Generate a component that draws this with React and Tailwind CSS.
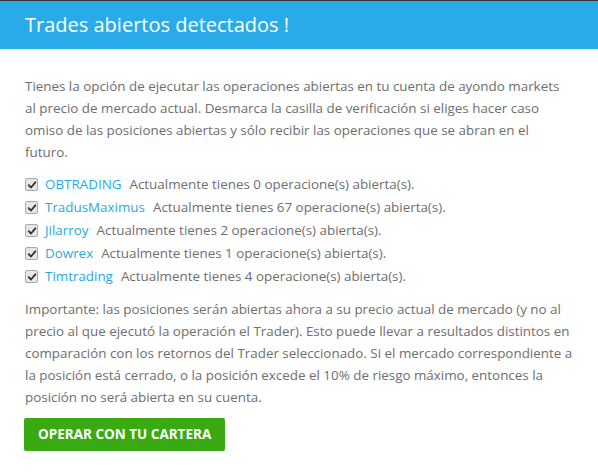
import { useState } from 'react';

const traders = [
  { name: 'OBTRADING', open: 0 },
  { name: 'TradusMaximus', open: 67 },
  { name: 'Jilarroy', open: 2 },
  { name: 'Dowrex', open: 1 },
  { name: 'Timtrading', open: 4 },
];

function Check({ checked, onToggle }) {
  return (
    <button
      type="button"
      onClick={onToggle}
      className="w-[13px] h-[13px] shrink-0 rounded-[2px] border border-[#a9a9a9] bg-[#e6e6e6] flex items-center justify-center"
    >
      {checked && (
        <svg viewBox="0 0 12 12" className="w-[10px] h-[10px]">
          <path d="M2 6.2 L4.8 9 L10 2.8" fill="none" stroke="#333" strokeWidth="2.2" strokeLinecap="round" strokeLinejoin="round" />
        </svg>
      )}
    </button>
  );
}

export default function App() {
  const [checked, setChecked] = useState(traders.map(() => true));

  const toggle = (i) => setChecked((prev) => prev.map((c, j) => (j === i ? !c : c)));

  return (
    <div className="w-[598px] h-[475px] bg-white font-['Open_Sans',sans-serif] text-[13.4px] text-[#6e6e6e] border-t border-[#333]">
      <div className="h-[48px] bg-[#29abe9] border-b border-[#e8e8e8] box-content flex items-center px-[25px]">
        <h1 className="text-[20px] text-white leading-none">Trades abiertos detectados !</h1>
      </div>

      <div className="pl-[25px] pr-[23px] pt-[25px]">
        <p className="leading-[22px] pr-[10px]">
          Tienes la opción de ejecutar las operaciones abiertas en tu cuenta de ayondo markets al precio de mercado
          actual. Desmarca la casilla de verificación si eliges hacer caso omiso de las posiciones abiertas y sólo
          recibir las operaciones que se abran en el futuro.
        </p>

        <ul className="mt-[10px]">
          {traders.map((t, i) => (
            <li key={t.name} className="h-[23px] flex items-center gap-[7px]">
              <Check checked={checked[i]} onToggle={() => toggle(i)} />
              <span>
                <a href="#" className="text-[#29aae2]">
                  {t.name}
                </a>
                <span className="ml-[8px]">Actualmente tienes {t.open} operacione(s) abierta(s).</span>
              </span>
            </li>
          ))}
        </ul>

        <p className="mt-[10px] leading-[22px]">
          Importante: las posiciones serán abiertas ahora a su precio actual de mercado (y no al precio al que ejecutó
          la operación el Trader). Esto puede llevar a resultados distintos en comparación con los retornos del Trader
          seleccionado. Si el mercado correspondiente a la posición está cerrado, o la posición excede el 10% de riesgo
          máximo, entonces la posición no será abierta en su cuenta.
        </p>

        <button
          type="button"
          className="mt-[10px] -ml-px h-[33px] px-[14px] rounded-[2px] bg-[#3aaa12] text-white font-bold uppercase text-[13.5px]"
        >
          Operar con tu cartera
        </button>
      </div>
    </div>
  );
}
